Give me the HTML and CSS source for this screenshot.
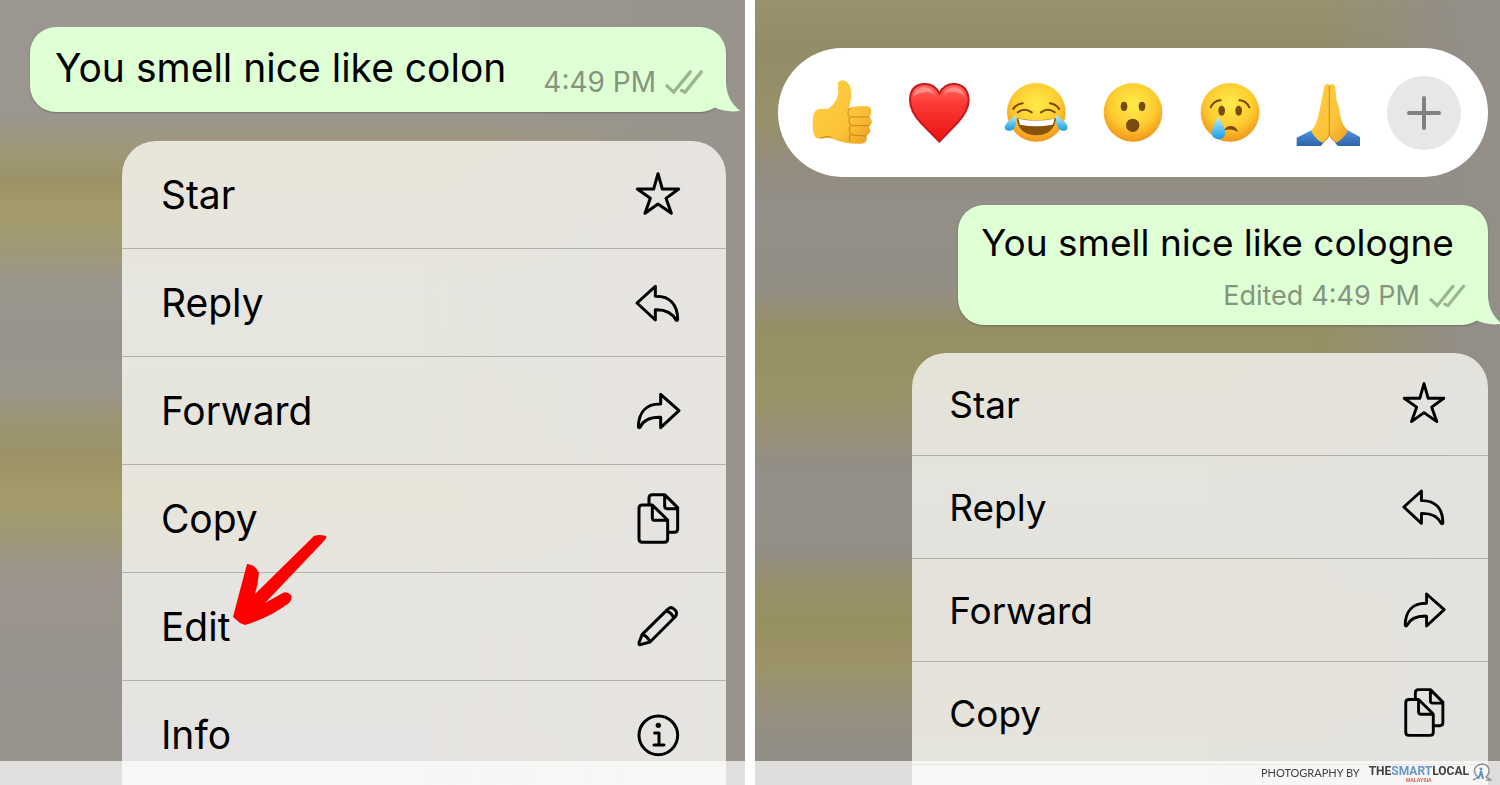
FILE: index.html
```html
<!DOCTYPE html>
<html lang="en">
<head>
<meta charset="utf-8">
<title>Editing a message</title>
<link rel="stylesheet" href="styles.css">
</head>
<body>
<svg class="defs" aria-hidden="true">
  <symbol id="star" viewBox="40 30 150 150"><path d="M115 41 L128 87 L177 87 L139 115 L155 160 L115 132 L76 160 L92 115 L53 87 L102 87 Z"/></symbol>
  <symbol id="reply" viewBox="40 354 150 150"><path d="M107 379 L52 429 L107 480 L107 449 C138 448 158 459 169 480 Q172 483 174 479 C174 434 151 408 107 409 Z"/></symbol>
  <symbol id="forward" viewBox="40 678 150 150"><path d="M123 703 L178 752 L123 803 L123 772 C94 771 71 781 61 802 Q57 805 56 800 C57 758 79 731 123 732 Z"/></symbol>
  <symbol id="copy" viewBox="40 42 150 150"><path d="M88 72 V54 Q88 44 98 44 H135 L174 83 V147 Q174 157 164 157 H147 M135 45 V79 Q135 86 142 86 H174 M68 75 H98 L144 120 V177 Q144 187 134 187 H68 Q58 187 58 177 V85 Q58 75 68 75 Z M98 76 V113 Q98 121 106 121 H143"/></symbol>
  <symbol id="pencil" viewBox="40 366 150 150"><path d="M67 464 L143 389 Q153 378 163 387 L167 391 Q175 400 166 411 L91 486 L62 494 Q57 495 58 488 Z M67 464 Q83 466 91 486 M139 393 Q156 397 162 414"/></symbol>
  <symbol id="info" viewBox="40 690 150 150"><circle cx="116" cy="766" r="58"/><path d="M105 759 H118 V795 M103 795 H133"/><circle class="dot" cx="116" cy="736" r="8"/></symbol>
  <symbol id="ticks" viewBox="400 140 120 80"><path d="M409 193 L429 212 L479 151 M453 207 L463 212 L512 151"/></symbol>
  <symbol id="tail" viewBox="510 186 126 90"><path d="M540 186 H588 C589 225 604 253 631 272 C605 277 576 273 553 262 L540 240 Z"/></symbol>
  <radialGradient id="face" cx=".5" cy=".36" r=".66"><stop offset="0" stop-color="#ffec48"/><stop offset=".6" stop-color="#fdcb2f"/><stop offset="1" stop-color="#f08f1a"/></radialGradient>
  <linearGradient id="skin" x1="0" y1="0" x2="1" y2="1"><stop offset="0" stop-color="#ffcf45"/><stop offset=".65" stop-color="#fcc238"/><stop offset="1" stop-color="#e99b22"/></linearGradient>
  <linearGradient id="love" x1="0" y1="0" x2="0" y2="1"><stop offset="0" stop-color="#ff6a60"/><stop offset=".35" stop-color="#fb3a35"/><stop offset="1" stop-color="#e9120f"/></linearGradient>
  <linearGradient id="tear" x1="0" y1="0" x2="0" y2="1"><stop offset="0" stop-color="#b4ecff"/><stop offset="1" stop-color="#159be6"/></linearGradient>
  <linearGradient id="sleeve" x1="0" y1="0" x2="0" y2="1"><stop offset="0" stop-color="#4f93dd"/><stop offset="1" stop-color="#285a9e"/></linearGradient>
</svg>

<main class="panes">
  <section class="pane before">
    <div class="bubble">
      <p class="message">You smell nice like colon</p>
      <p class="meta"><span>4:49 PM</span><svg class="ticks"><use href="#ticks"/></svg></p>
      <svg class="tail"><use href="#tail"/></svg>
    </div>
    <div class="menu">
      <button class="item">Star<svg class="icon"><use href="#star"/></svg></button>
      <button class="item">Reply<svg class="icon"><use href="#reply"/></svg></button>
      <button class="item">Forward<svg class="icon"><use href="#forward"/></svg></button>
      <button class="item">Copy<svg class="icon"><use href="#copy"/></svg></button>
      <button class="item">Edit<svg class="icon"><use href="#pencil"/></svg>
        <svg class="pointer" viewBox="0 0 120 120"><path d="M94 16 Q99 14 106 16 Q107 18 104 21 L45 83 L61 74 Q66 70 71 75 Q73 79 69 83 Q49 98 25 105 L20 103 L13 97 Q20 70 27 44 Q36 45 39 53 Q38 64 35 74 Z"/></svg>
      </button>
      <button class="item">Info<svg class="icon"><use href="#info"/></svg></button>
    </div>
  </section>

  <section class="pane after">
    <div class="reactions">
      <button class="reaction" aria-label="Thumbs up"><svg viewBox="118 120 198 198"><path fill="url(#skin)" d="M204 128 Q213 116 227 123 Q242 131 244 151 Q247 172 241 191 L238 204 Q248 198 289 198 Q303 199 305 212 Q306 224 299 231 Q308 238 306 249 Q304 257 298 260 Q304 268 301 276 Q298 284 290 288 Q294 297 288 305 Q283 312 262 311 Q224 311 198 300 Q184 293 169 294 Q150 299 140 294 Q130 287 129 257 Q128 219 140 210 Q150 205 174 207 Q190 198 201 177 Q208 162 205 145 Z"/><path class="crease" d="M242 204 Q232 213 235 223 Q238 231 246 231 H299 M239 231 Q234 247 244 257 H298 M241 258 Q235 271 245 285 L290 288 M241 283 Q236 294 242 304 M151 294 Q171 286 186 292"/></svg></button>
      <button class="reaction" aria-label="Love"><svg viewBox="408 120 198 198"><path fill="url(#love)" stroke="#c9151b" stroke-width="6" d="M508 160 Q494 131 461 132 Q420 136 420 180 Q420 214 454 250 L508 305 L561 250 Q596 212 596 180 Q594 137 556 132 Q523 130 508 160 Z"/><path d="M430 172 Q433 143 462 142 Q485 143 494 162 Q477 153 456 158 Q437 161 430 172 Z M521 162 Q532 142 554 142 Q579 145 585 170 Q571 157 552 156 Q535 154 521 162 Z" fill="#fff" opacity=".3"/></svg></button>
      <button class="reaction" aria-label="Laugh"><svg viewBox="699 120 198 198"><circle cx="799" cy="217" r="88" fill="url(#face)"/><path class="brow" d="M730 207 Q738 193 758 190 M840 190 Q859 193 867 207 M743 217 Q764 201 785 217 M813 217 Q834 201 854 217"/><path fill="#8a520c" d="M740 235 Q798 247 858 235 Q853 285 799 286 Q745 285 740 235 Z"/><path fill="#fff" d="M745 236 Q798 247 853 236 Q852 250 847 254 Q799 263 750 254 Z"/><path fill="url(#tear)" d="M739 226 Q742 265 723 272 Q706 275 704 262 Q706 247 739 226 Z M858 226 Q856 265 875 272 Q891 275 893 262 Q891 247 858 226 Z"/></svg></button>
      <button class="reaction" aria-label="Surprised"><svg viewBox="990 120 198 198"><circle cx="1089" cy="217" r="88" fill="url(#face)"/><g fill="#79490d"><ellipse cx="1062" cy="199" rx="10" ry="14"/><ellipse cx="1116" cy="199" rx="10" ry="14"/><ellipse cx="1088" cy="256" rx="20" ry="20"/></g></svg></button>
      <button class="reaction" aria-label="Sad"><svg viewBox="201 120 198 198"><circle cx="300" cy="217" r="88" fill="url(#face)"/><g fill="#79490d"><ellipse cx="275" cy="212" rx="10" ry="15"/><ellipse cx="326" cy="212" rx="10" ry="15"/></g><path class="brow" d="M242 202 Q252 182 272 181 M328 181 Q348 182 358 202"/><path fill="#79490d" d="M280 273 Q289 257 304 258 Q319 260 324 276 Q302 263 280 273 Z"/><path fill="url(#tear)" d="M264 231 Q246 261 245 279 Q247 297 265 298 Q284 297 286 279 Q284 259 264 231 Z"/></svg></button>
      <button class="reaction" aria-label="Thanks"><svg viewBox="1278 64 198 198"><g transform="translate(1272 60)"><path fill="url(#sleeve)" d="M14 177 L60 154 L96 190 L80 211 H14 Z M208 177 L166 154 L128 190 L144 211 H208 Z"/><path fill="url(#skin)" d="M96 26 Q98 15 107 16 Q112 17 112 22 V166 Q108 183 92 192 Q74 186 57 157 Q74 140 81 102 Q87 76 96 26 Z M113 22 Q115 15 121 16 Q129 17 130 30 L134 66 Q141 82 144 106 Q148 137 168 157 Q151 185 132 192 Q118 184 113 166 Z"/><path class="crease" d="M112 20 V162 Q112 180 92 191 M113 162 Q113 180 132 191"/></g></svg></button>
      <button class="reaction more" aria-label="More reactions"><svg viewBox="0 0 74 74"><path d="M22 37 H52 M37 22 V52"/></svg></button>
    </div>
    <div class="bubble">
      <p class="message">You smell nice like cologne</p>
      <p class="meta"><span>Edited</span><span>4:49 PM</span><svg class="ticks"><use href="#ticks"/></svg></p>
      <svg class="tail"><use href="#tail"/></svg>
    </div>
    <div class="menu">
      <button class="item">Star<svg class="icon"><use href="#star"/></svg></button>
      <button class="item">Reply<svg class="icon"><use href="#reply"/></svg></button>
      <button class="item">Forward<svg class="icon"><use href="#forward"/></svg></button>
      <button class="item">Copy<svg class="icon"><use href="#copy"/></svg></button>
    </div>
  </section>
</main>

<footer class="credit">
  <span class="by">PHOTOGRAPHY BY</span>
  <span class="brand"><span class="name">THE<span class="smart">SMART</span>LOCAL</span><span class="country">MALAYSIA</span></span>
  <svg class="mark" viewBox="0 0 20 20"><path d="M1 17 Q5 15 6 14 Q1 10 3 5 Q6 1 11 1 Q17 2 17 8 Q17 12 14 14 L19 17 H14" fill="none" stroke="#929596" stroke-width="1.500"/><circle cx="9" cy="6" r="1.500" fill="#5d8fc7"/><path d="M8 8 H10 L12 16 H10 L9 12 L7 16 H5 L7 12 Z" fill="#5d8fc7"/></svg>
</footer>
</body>
</html>
```
FILE: styles.css
```css
* { box-sizing: border-box; }

body {
  margin: 0;
  background: #fff;
  color: #000;
  font-family: Inter, "Liberation Sans", sans-serif;
}

p { margin: 0; }

button {
  margin: 0;
  padding: 0;
  border: 0;
  background: none;
  color: inherit;
  font: inherit;
}

symbol { overflow: visible; }

.defs { position: absolute; width: 0; height: 0; }

.panes {
  display: grid;
  grid-template-columns: 1fr 1fr;
  gap: 10px;
  height: 100vh;
}

.pane {
  display: flex;
  flex-direction: column;
  align-items: flex-end;
  gap: 28px;
  min-width: 0;
  overflow: hidden;
}

.before {
  padding: 27px 19px 0 30px;
  gap: 29px;
  background:
    linear-gradient(to right, transparent 65%, #98948d 95%),
    linear-gradient(#9b968f 0 115px, #9f9876 155px, #9b9366 180px, #a49c6a 210px, #a19a72 240px, #9b968b 280px, #98948d 340px, #9b968b 390px, #9c9571 425px, #9b9366 455px, #a49c6a 500px, #a09973 530px, #9b958c 570px, #98938e 680px, #97938c);
}

.after {
  padding: 48px 12px 0 23px;
  background:
    linear-gradient(to right, transparent 75%, #938e88 95%),
    linear-gradient(#98926f, #928c68 50px, #989169 120px, #938d7d 160px, #938e88 200px, #938e84 290px, #969064 330px, #979063 360px, #9b9468 400px, #979078 435px, #938e88 470px, #938e86 550px, #969068 590px, #979060 625px, #9c9469 670px, #97917b 700px, #938e85 740px, #928e87);
}

.bubble {
  position: relative;
  display: flex;
  background: #dfffd5;
  border-radius: 26px;
  box-shadow: 0 1px 2px rgba(0, 0, 0, .25);
  white-space: nowrap;
}

.before .bubble {
  justify-content: space-between;
  align-items: flex-end;
  width: 100%;
  padding: 12px 22px 16px 25px;
}

.after .bubble {
  flex-direction: column;
  gap: 13px;
  width: 74.6%;
  padding: 12px 22px 15px 23px;
}

.message { font-size: 37px; line-height: 52px; }
.before .message { font-size: 39px; line-height: 57px; align-self: flex-start; }

.meta {
  display: flex;
  justify-content: flex-end;
  gap: 8px;
  color: #84957f;
  font-size: 28px;
  line-height: 28px;
}

.after .meta { font-size: 27px; }

.ticks {
  width: 40px;
  height: 27px;
  fill: none;
  stroke: #9db493;
  stroke-width: 10;
  stroke-linecap: round;
}

.after .ticks { width: 38px; }

.tail {
  position: absolute;
  right: -16px;
  bottom: 0;
  width: 42px;
  height: 30px;
  fill: #dfffd5;
}

.menu {
  flex: 1 0 auto;
  display: flex;
  flex-direction: column;
  border-radius: 34px 34px 0 0;
}

.before .menu {
  width: 86.8%;
  background: linear-gradient(to right, transparent 50%, #e6e4e0), linear-gradient(#e8e5d9, #e6e5df 150px, #e6e5dd 300px, #e7e5da 360px, #e5e4e0 460px, #e5e3e2);
  font-size: 39px;
}

.after .menu {
  width: 81.1%;
  background: linear-gradient(to right, transparent 50%, #e4e2dd), linear-gradient(#e5e3d7, #e4e3de 150px, #e4e2da 270px, #e5e3da 330px, #e4e3de);
  font-size: 37px;
}

.item {
  position: relative;
  display: flex;
  align-items: center;
  justify-content: space-between;
  width: 100%;
  height: 108px;
  padding: 0 43px 0 39px;
  border-bottom: 1px solid #b3b2ae;
  text-align: left;
}

.after .item { height: 103px; padding: 0 40px 0 37px; }

.icon {
  width: 50px;
  height: 50px;
  overflow: visible;
  fill: none;
  stroke: #000;
  stroke-width: 9;
  stroke-linejoin: round;
  stroke-linecap: round;
}

.after .icon { width: 48px; height: 48px; }
.dot { fill: #000; stroke: none; }

.pointer {
  position: absolute;
  left: 98px;
  top: -53px;
  z-index: 1;
  width: 120px;
  height: 120px;
  fill: #f00;
  pointer-events: none;
}

.reactions {
  display: grid;
  grid-template-columns: repeat(7, 1fr);
  align-items: center;
  justify-items: center;
  width: 100%;
  min-height: 129px;
  padding: 0 16px;
  border-radius: 65px;
  background: #fff;
}

.reaction { width: 66px; height: 66px; }
.reaction svg { display: block; width: 100%; height: 100%; }
.crease { fill: none; stroke: #ce8514; stroke-width: 3; }
.brow { fill: none; stroke: #79490d; stroke-width: 6; stroke-linecap: round; }

.more {
  width: 74px;
  height: 74px;
  border-radius: 50%;
  background: #e6e7e7;
}

.more svg { stroke: #808181; stroke-width: 4; stroke-linecap: round; }

.credit {
  position: fixed;
  left: 0;
  right: 0;
  bottom: 0;
  z-index: 2;
  display: flex;
  justify-content: flex-end;
  align-items: center;
  gap: 9px;
  height: 24px;
  padding-right: 8px;
  background: rgba(255, 255, 255, .7);
  color: #3f4041;
}

.by { font: 11px/26px Lato, sans-serif; }

.brand { display: flex; flex-direction: column; align-items: center; }
.name { font: bold 12px/14px Roboto, sans-serif; }
.smart { color: #6796cb; }
.country { color: #d2523f; font: bold 5px/5px "Liberation Sans", sans-serif; }
.mark { width: 20px; height: 20px; margin-left: -6px; }
```
